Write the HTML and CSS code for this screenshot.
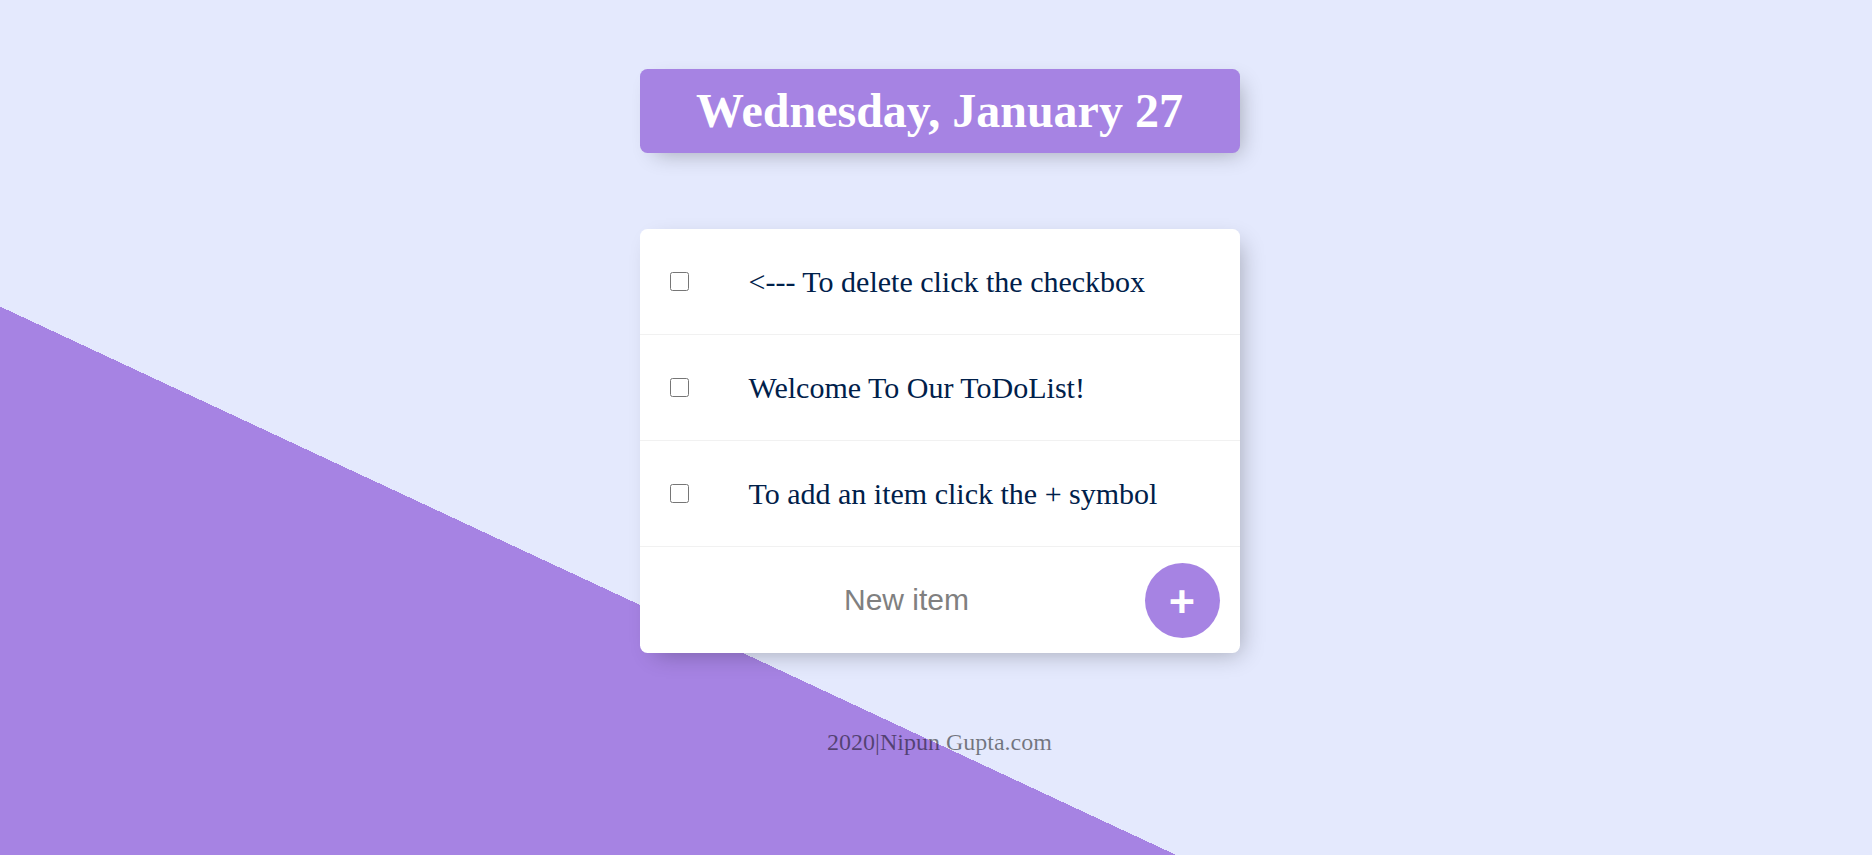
FILE: index.html
```html
<!DOCTYPE html>
<html lang="en">
<head>
<meta charset="utf-8">
<title>To-Do List</title>
<link rel="stylesheet" href="styles.css">
</head>
<body>
  <div class="box heading">
    <h1 class="title">Wednesday, January 27</h1>
  </div>
  <div class="box list">
    <div class="item">
      <input class="check" type="checkbox">
      <p class="text">&lt;--- To delete click the checkbox</p>
    </div>
    <div class="item">
      <input class="check" type="checkbox">
      <p class="text">Welcome To Our ToDoList!</p>
    </div>
    <div class="item">
      <input class="check" type="checkbox">
      <p class="text">To add an item click the + symbol</p>
    </div>
    <form class="item add-form">
      <input class="new-item" type="text" placeholder="New item" autocomplete="off">
      <button class="add-btn" type="button">+</button>
    </form>
  </div>
  <footer class="footer">2020|Nipun Gupta.com</footer>
</body>
</html>
```

FILE: styles.css
```css
html {
  background-color: #E4E9FD;
  background-image: linear-gradient(25deg, #A683E3 50%, #E4E9FD 50%);
  background-repeat: no-repeat;
  background-size: 1872px 1486px;
  background-position: 0 0;
  height: 100%;
}

body {
  margin: 0;
  padding: 69px 0 0 7px;
  font-family: "Liberation Serif", "Times New Roman", serif;
  overflow: hidden;
}

.box {
  width: 600px;
  margin: 0 auto 75px;
  border-radius: 7.5px;
  box-shadow: 7.5px 7.5px 22.5px -7.5px rgba(0, 0, 0, 0.3);
}

.heading {
  background-color: #A683E3;
  text-align: center;
  margin-bottom: 76px;
}

.title {
  margin: 0;
  padding: 15px;
  font-size: 48px;
  line-height: 54px;
  font-weight: bold;
  color: #fff;
}

.list {
  background: #fff;
}

.item {
  min-height: 105px;
  display: flex;
  align-items: center;
  border-bottom: 1px solid #F1F1F1;
}

.item:last-child {
  border-bottom: 0;
}

.check {
  margin: 0 30px;
  width: 19px;
  height: 19px;
  flex: none;
}

.text {
  margin: 0;
  padding: 30px;
  font-size: 30px;
  line-height: 34px;
  color: #00204a;
}

.add-form {
  margin-left: 30px;
  height: 106px;
}

.new-item {
  flex: none;
  width: 414px;
  height: 90px;
  border: none;
  padding: 0 0 0 30px;
  margin: 0;
  text-align: center;
  font-family: "Liberation Sans", Arial, sans-serif;
  font-size: 30px;
  background: transparent;
  outline: none;
}

.new-item::placeholder {
  color: grey;
  opacity: 1;
}

.add-btn {
  flex: none;
  margin-left: 31px;
  width: 75px;
  height: 75px;
  border-radius: 50%;
  border: 0;
  padding: 3px 0 0;
  background-color: #A683E3;
  color: #fff;
  font-family: "Liberation Sans", Arial, sans-serif;
  font-size: 45px;
  line-height: 1;
  font-weight: bold;
}

.footer {
  text-align: center;
  font-size: 24px;
  line-height: 28px;
  color: rgba(0, 0, 0, 0.5);
}
```
